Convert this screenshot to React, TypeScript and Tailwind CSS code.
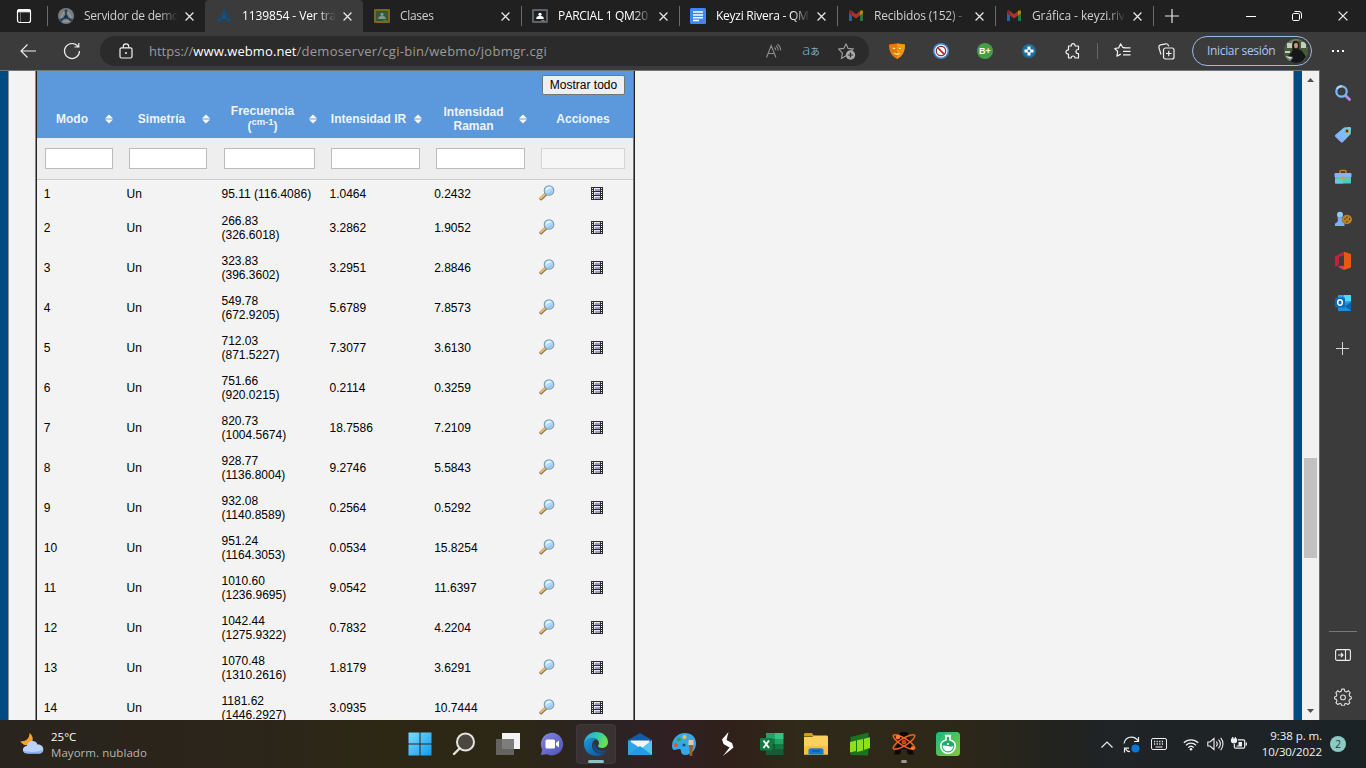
import React from "react";

const UI = "font-['Open_Sans','Noto_Sans',sans-serif]";

/* ---------- favicons ---------- */

function WebMo({ disc }: { disc?: boolean }) {
  return (
    <svg width="16" height="16" viewBox="0 0 16 16" shapeRendering="auto">
      {disc && <circle cx="8" cy="8" r="8" fill="#7d7d7d" />}
      <path d="M8 3v6M8 9l-5 3M8 9l5 3" stroke={disc ? "#1c3c56" : "#0a5590"} strokeWidth="1.5" />
      <path d="M6 4 2.6 10M10 4l3.4 6M5 13.2h6" stroke={disc ? "#a9b4bd" : "#174a6e"} strokeWidth=".8" fill="none" />
      <circle cx="8" cy="2.8" r="1.5" fill={disc ? "#1d4a70" : "#0a4f85"} />
      <circle cx="8" cy="8.8" r="1.9" fill={disc ? "#16334c" : "#0b5a99"} />
      <circle cx="2.6" cy="12.2" r="1.6" fill={disc ? "#1d4a70" : "#0a4f85"} />
      <circle cx="13.4" cy="12.2" r="1.6" fill={disc ? "#1d4a70" : "#0a4f85"} />
    </svg>
  );
}

function Classroom({ frame, inner, person }: { frame: string; inner: string; person: string }) {
  return (
    <svg width="16" height="16" viewBox="0 0 16 16">
      <rect y="1" width="16" height="14" rx="1.2" fill={frame} />
      <rect x="2" y="3" width="12" height="10" fill={inner} />
      <circle cx="8" cy="6.3" r="1.6" fill={person} />
      <path d="M4.3 11V10c0-1.300 2-1.900 3.700-1.900s3.700.6 3.700 1.900v1z" fill={person} />
      <rect x="9.500" y="12" width="3" height="1" fill={person} opacity=".5" />
    </svg>
  );
}

function Docs() {
  return (
    <svg width="16" height="16" viewBox="0 0 16 16">
      <rect width="16" height="16" rx="1.500" fill="#4285f4" />
      <path d="M3 4h10M3 6.900h10M3 9.800h10M3 12.500h6" stroke="#fff" strokeWidth="1.500" />
    </svg>
  );
}

function Gmail() {
  return (
    <svg width="16" height="16" viewBox="0 0 16 16">
      <path d="M1 4.500v8.500h3V7z" fill="#2f5ea8" />
      <path d="M15 4.500v8.500h-3V7z" fill="#237a3c" />
      <path d="M1 3.800C1 2.500 2.500 2 3.500 2.800L8 6.300l4.500-3.500C13.500 2 15 2.500 15 3.800v1.400L8 10.400 1 5.200z" fill="#a8342b" />
      <path d="M12 3.200 12.500 2.800C13.500 2 15 2.500 15 3.800v1.400L12 7.400z" fill="#b08a12" />
      <path d="M1 3.800C1 2.500 2.500 2 3.500 2.800L4 3.200v4.200L1 5.200z" fill="#8d2520" />
    </svg>
  );
}

/* ---------- tab strip ---------- */

function CloseX({ size = 9 }: { size?: number }) {
  return (
    <svg width={size} height={size} viewBox="0 0 8 8">
      <path d="M.5.5l7 7M7.500.5l-7 7" stroke="#e8e8e8" strokeWidth="1.100" />
    </svg>
  );
}

type TabProps = { icon: React.ReactNode; title: string; active?: boolean; bright?: boolean; line?: boolean; spacing?: string };

function Tab({ icon, title, active, bright, line, spacing = "tracking-[-0.2px]" }: TabProps) {
  return (
    <div className={`relative flex h-8 w-[158px] shrink-0 items-center pl-[11px] ${active ? "rounded-t-[4px] bg-[#3b3b3b]" : ""}`}>
      {line && <span className="absolute left-0 top-[6px] h-5 w-px bg-[#6b6b6b]" />}
      <span className="shrink-0">{icon}</span>
      <span
        className={`ml-[10px] w-[94px] overflow-hidden whitespace-nowrap text-[12px] leading-4 [mask-image:linear-gradient(to_right,#000_80%,transparent)] ${spacing} ${active || bright ? "text-white" : "text-[#cfcfcf]"}`}
      >
        {title}
      </span>
      <span className="ml-[7px]">
        <CloseX />
      </span>
    </div>
  );
}

function TabStrip() {
  return (
    <div className="flex h-8 shrink-0 items-center bg-[#202020]">
      <div className="flex w-[47px] justify-center">
        <svg width="16" height="16" viewBox="0 0 16 16" className="ml-[1px]">
          <rect x="1.500" y="1.500" width="13" height="13" rx="2" fill="none" stroke="#fff" strokeWidth="1.200" />
          <path d="M1.500 3.800V3c0-1 .6-1.500 1.500-1.500h10c1 0 1.500.6 1.500 1.500v.8z" fill="#fff" stroke="#fff" />
          <path d="M4.500 4v10" stroke="#999" strokeWidth=".6" />
        </svg>
      </div>
      <Tab line icon={<WebMo disc />} title="Servidor de demo" spacing="tracking-[-0.28px]" />
      <Tab active icon={<WebMo />} title="1139854 - Ver tra" spacing="tracking-[-0.1px]" />
      <Tab icon={<Classroom frame="#80661a" inner="#35553f" person="#7f9a87" />} title="Clases" spacing="tracking-[-0.3px]" />
      <Tab line bright icon={<Classroom frame="#5f6368" inner="#202124" person="#fff" />} title="PARCIAL 1 QM20" spacing="tracking-[-0.3px]" />
      <Tab line bright icon={<Docs />} title="Keyzi Rivera - QM" spacing="tracking-[-0.25px]" />
      <Tab line icon={<Gmail />} title="Recibidos (152) -" />
      <Tab line icon={<Gmail />} title="Gráfica - keyzi.riv" spacing="tracking-[-0.1px]" />
      <div className="relative flex h-8 w-[37px] items-center justify-center">
        <span className="absolute left-0 top-[6px] h-5 w-px bg-[#6b6b6b]" />
        <svg width="14" height="14" viewBox="0 0 14 14">
          <path d="M7 0v14M0 7h14" stroke="#e6e6e6" strokeWidth="1.200" />
        </svg>
      </div>
      <div className="ml-auto flex items-center">
        <div className="flex w-[46px] justify-center">
          <span className="h-px w-[10px] bg-white" />
        </div>
        <div className="flex w-[46px] justify-center">
          <svg width="10" height="10" viewBox="0 0 10 10" fill="none" stroke="#fff">
            <rect x=".5" y="2.500" width="7" height="7" rx="1.200" />
            <path d="M2.500.5H7A2.500 2.500 0 0 1 9.500 3v4.500" />
          </svg>
        </div>
        <div className="flex w-[46px] justify-center">
          <CloseX size={10} />
        </div>
      </div>
    </div>
  );
}

/* ---------- toolbar ---------- */

function Slot({ children, w = "w-11" }: { children: React.ReactNode; w?: string }) {
  return <div className={`flex ${w} shrink-0 items-center justify-center`}>{children}</div>;
}

function Toolbar() {
  return (
    <div className="flex h-[38px] shrink-0 items-center bg-[#3b3b3b] pl-[6px]">
      <Slot>
        <svg width="16" height="14" viewBox="0 0 16 14" fill="none" stroke="#f2f2f2" strokeWidth="1.100">
          <path d="M16 7H1M7.500.5 1 7l6.500 6.500" />
        </svg>
      </Slot>
      <Slot>
        <svg width="18" height="18" viewBox="0 0 18 18" fill="none" stroke="#f2f2f2" strokeWidth="1.200">
          <path d="M15 4.500A7.500 7.500 0 1 0 16.500 9M15.800 1v4h-4.300" />
        </svg>
      </Slot>
      <div className="ml-[6px] flex h-[30px] w-[769px] shrink-0 items-center rounded-full bg-[#2b2b2b] pl-[19px]">
        <svg width="14" height="16" viewBox="0 0 14 16" fill="none" stroke="#f2f2f2" strokeWidth="1.200">
          <rect x="1" y="4.800" width="12" height="10.200" rx="1.500" />
          <path d="M4.300 4.800V3.500C4.300 1.800 5.300.8 7 .8s2.700 1 2.700 2.700v1.300" />
          <circle cx="7" cy="10" r="1" fill="#f2f2f2" stroke="none" />
        </svg>
        <div className="ml-4 w-[602px] whitespace-nowrap text-[13px] leading-[18px] text-[#9b9b9b]">
          <span>https://</span>
          <span className="tracking-[0.08px] text-white">www.webmo.net</span>
          <span className="tracking-[0.27px]">/demoserver/cgi-bin/webmo/jobmgr.cgi</span>
        </div>
        <Slot w="w-[46px]">
          <svg width="16" height="14" viewBox="0 0 16 14" fill="none" stroke="#8e8e8e" strokeWidth="1.100">
            <path d="M.5 13.500 5.200 1.500l4.700 12M2.200 9.500h6M8.500 3.500c1 .7 1.300 1.600 1.300 2.800M10 1.700c1.600 1.100 2.300 2.700 2.300 4.700M11.500.3c2 1.300 3.100 3.400 3.100 6" />
          </svg>
        </Slot>
        <Slot w="w-[28px]">
          <span className="whitespace-nowrap pb-[3px] text-[12px] leading-none text-[#83b5dc]">
            <span className="text-[15px] font-light">a</span>
            <span className="font-['Noto_Sans_CJK_JP',sans-serif] text-[9.500px]">あ</span>
          </span>
        </Slot>
        <Slot w="w-[44px]">
          <svg width="18" height="17" viewBox="0 0 18 17">
            <path d="M8 .8l2.100 4.600 5 .6-3.600 3.500M8 12.800l-4.500 2.600.9-5.200L.8 6l5-.6L8 .8" fill="none" stroke="#a0a0a0" strokeWidth="1.100" />
            <circle cx="12.500" cy="12" r="4.700" fill="#a8a8a8" />
            <path d="M12.500 9.400v5.200M9.900 12h5.200" stroke="#2b2b2b" strokeWidth="1.200" />
          </svg>
        </Slot>
      </div>
      <div className="ml-[6px] flex shrink-0">
        <Slot>
          <svg width="16" height="16" viewBox="0 0 16 16">
            <path d="M0 1.500C3 1.500 5 .5 8 .5s5 1 8 1c0 7-2.500 11.500-8 14.500C2.500 13 0 8.500 0 1.500z" fill="#e8780c" />
            <path d="M8 .5c3 0 5 1 8 1 0 7-2.500 11.500-8 14.500z" fill="#f7980f" />
            <path d="M3 5.800c1-2 3-2 4 0-1.300.9-2.700.9-4 0zM9 5.800c1-2 3-2 4 0-1.300.9-2.700.9-4 0zM3.500 8.800c2.500 1.800 6.500 1.800 9 0-.8 4.600-8.200 4.600-9 0z" fill="#fff06b" stroke="#9c4506" strokeWidth=".4" />
          </svg>
        </Slot>
        <Slot>
          <svg width="16" height="16" viewBox="0 0 16 16">
            <circle cx="8" cy="8" r="8" fill="#3d8bd6" />
            <circle cx="8" cy="8" r="6.500" fill="#f2f2f2" />
            <circle cx="8" cy="8" r="4.700" fill="#fff" stroke="#7a3236" strokeWidth="1.200" />
            <path d="M4.700 4.700l6.600 6.600" stroke="#b3262a" strokeWidth="1.700" />
          </svg>
        </Slot>
        <Slot>
          <span className="flex h-4 w-4 items-center justify-center rounded-full bg-[#43a047] font-['Liberation_Sans',sans-serif] text-[9px] font-bold leading-none text-white">
            B+
          </span>
        </Slot>
        <Slot>
          <svg width="14" height="14" viewBox="0 0 14 14">
            <circle cx="7" cy="7" r="7" fill="#1f6f9e" />
            <path d="M5.500 2.500h3v3h3v3h-3v3h-3v-3h-3v-3h3z" fill="#fff" />
            <rect x="5.800" y="5.800" width="2.400" height="2.400" fill="#2479a8" />
          </svg>
        </Slot>
        <Slot>
          <svg width="16" height="17" viewBox="0 0 16 17" fill="none" stroke="#f0f0f0" strokeWidth="1.200" strokeLinejoin="round">
            <path d="M3.500 3h2.800C6 1.600 6.800.7 8.100.7S10.300 1.600 10 3H13.500v3.500H13c-1.200 0-2 .8-2 2s.8 2 2 2h.5V15H10c.1-1.200-.7-2-2-2s-1.900.8-1.800 2H3.500v-4C2 11.200 1 10.300 1 9s1-2.200 2.500-2z" />
          </svg>
        </Slot>
      </div>
      <span className="ml-[2px] h-4 w-px shrink-0 bg-[#666]" />
      <div className="ml-[2px] flex shrink-0">
        <Slot>
          <svg width="17" height="16" viewBox="0 0 17 16" fill="none" stroke="#f0f0f0" strokeWidth="1.200" strokeLinejoin="round">
            <path d="M11 4.700 8.800 4.500 6.600.8 4.700 4.900.7 5.500l3 3-.8 4.600 3.900-2M9 4.800h7.500M9 8.300h7.500M9 11.800h7.500" />
          </svg>
        </Slot>
        <Slot>
          <svg width="17" height="17" viewBox="0 0 17 17" fill="none" stroke="#f0f0f0" strokeWidth="1.200">
            <rect x="5.500" y="5" width="10.500" height="11" rx="2" />
            <path d="M10.750 7.700v5.600M8 10.500h5.500M3 11.500 1 4.800C.6 3.300 1.200 2.300 2.500 1.900L7.800.8c1.200-.2 2 .3 2.500 1.500l.4 1" />
          </svg>
        </Slot>
      </div>
      <div className="ml-[4px] flex h-[30px] w-[120px] shrink-0 items-center justify-between rounded-full border border-[#9cb9e8] pl-[14px] pr-[3px]">
        <span className="whitespace-nowrap text-[12px] tracking-[-0.33px] text-[#abc8f5]">Iniciar sesión</span>
        <svg width="24" height="24" viewBox="0 0 24 24" className="rounded-full">
          <rect width="24" height="24" fill="#6e8062" />
          <path d="M0 7l6-4 4 3 5-5 9 5v12H0z" fill="#435a3b" />
          <path d="M3 4h5v5H3zM17 3h5v6h-5zM1 12h5v2H1z" fill="#c3cfbb" />
          <path d="M9 3c3-3 7 0 6 5l-1 5H8c1-3 0-7 1-10z" fill="#211713" />
          <ellipse cx="12" cy="6.500" rx="2" ry="2.700" fill="#c59a83" />
          <path d="M8 13c2-3 7-4 10-1l4 6-5 6H5l4-5-6-1z" fill="#15161a" />
          <path d="M1 17l8 1-3 2z" fill="#d8d9d2" />
        </svg>
      </div>
      <div className="ml-[20px] flex gap-[3px]">
        <span className="h-[2px] w-[2px] bg-white" />
        <span className="h-[2px] w-[2px] bg-white" />
        <span className="h-[2px] w-[2px] bg-white" />
      </div>
    </div>
  );
}

/* ---------- results table ---------- */

const COLS = "grid grid-cols-[84px_95px_107px_105px_105px_100px]";

const rows: [string, string, string, string][] = [
  ["95.11", "(116.4086)", "1.0464", "0.2432"],
  ["266.83", "(326.6018)", "3.2862", "1.9052"],
  ["323.83", "(396.3602)", "3.2951", "2.8846"],
  ["549.78", "(672.9205)", "5.6789", "7.8573"],
  ["712.03", "(871.5227)", "7.3077", "3.6130"],
  ["751.66", "(920.0215)", "0.2114", "0.3259"],
  ["820.73", "(1004.5674)", "18.7586", "7.2109"],
  ["928.77", "(1136.8004)", "9.2746", "5.5843"],
  ["932.08", "(1140.8589)", "0.2564", "0.5292"],
  ["951.24", "(1164.3053)", "0.0534", "15.8254"],
  ["1010.60", "(1236.9695)", "9.0542", "11.6397"],
  ["1042.44", "(1275.9322)", "0.7832", "4.2204"],
  ["1070.48", "(1310.2616)", "1.8179", "3.6291"],
  ["1181.62", "(1446.2927)", "3.0935", "10.7444"],
];

function SortIcon() {
  return (
    <svg width="8" height="10" viewBox="0 0 8 10" className="shrink-0">
      <path d="M4 0.500 8 4.500H0zM0 5.500h8l-4 4z" fill="#fff" />
    </svg>
  );
}

function Head({ children, first }: { children: React.ReactNode; first?: boolean }) {
  return (
    <div className="flex items-center">
      <div className={`flex-1 text-center ${first ? "pl-[2px]" : ""}`}>{children}</div>
      <div className={`flex justify-start ${first ? "w-4" : "w-[14px]"}`}>
        <SortIcon />
      </div>
    </div>
  );
}

function Magnifier() {
  return (
    <svg width="16" height="16" viewBox="0 0 16 16">
      <path d="M2 13.700 6.500 9.500" stroke="#8a7a62" strokeWidth="3.400" strokeLinecap="round" />
      <path d="M1.800 13.200 6 9.300" stroke="#f3bd60" strokeWidth="1.900" strokeLinecap="round" />
      <circle cx="10" cy="5.500" r="4.800" fill="#b5dcf7" stroke="#7d99b3" strokeWidth="1.100" />
      <path d="M6.500 5.800C6.500 3.500 8.300 2 10.300 2c1 0 1.900.3 2.400.9-2 .1-4.500 1.200-6.200 2.900z" fill="#effaff" />
      <path d="M7.500 7.800c2.300.5 4.500-.6 5.900-3.300.4 3.600-3.300 6.300-5.900 3.300z" fill="#83c4f0" />
    </svg>
  );
}

function Film() {
  return (
    <svg width="12" height="13" viewBox="0 0 12 13" shapeRendering="crispEdges">
      <rect width="12" height="13" fill="#2b2b2b" />
      <path d="M1.500 1v12M10.500 1v12" stroke="#f3f3f3" strokeWidth="1" strokeDasharray="1 1" />
      <path d="M3 1h6v3H3zM3 5h6v3H3zM3 9h6v3H3z" fill="#e8e8f4" />
      <path d="M4 2h5v2H4zM4 6h5v2H4zM4 10h5v2H4z" fill="#9a9ac8" />
    </svg>
  );
}

function ResultsTable() {
  return (
    <div className="w-[600px] shrink-0 border-l border-r border-l-[#8a8a8a] border-r-[#222] font-['Liberation_Sans',Arial,sans-serif] text-[12px] leading-[14px] text-black">
      <div className="border-l border-r border-l-[#222] border-r-[#777]">
        <div className="flex h-[67px] flex-col bg-[#5b98dc]">
          <div className="flex justify-end pr-[8px] pt-[4px]">
            <button className="h-5 w-[83px] whitespace-nowrap rounded-[2px] border border-[#767676] bg-[#efefef] text-[12px] leading-none text-black">
              Mostrar todo
            </button>
          </div>
          <div className={`${COLS} h-[43px] items-center pt-[5px] font-bold text-[#eef4fb]`}>
            <Head first>Modo</Head>
            <Head>Simetría</Head>
            <Head>
              <div>Frecuencia</div>
              <div className="leading-[17px]">
                (<sup className="text-[9.500px]">cm-1</sup>)
              </div>
            </Head>
            <Head>
              <span className="whitespace-nowrap">Intensidad IR</span>
            </Head>
            <Head>
              Intensidad
              <br />
              Raman
            </Head>
            <div className="text-center">Acciones</div>
          </div>
        </div>
        <div className={`${COLS} h-[42px] items-center border-b border-[#ccc] bg-[#eee] [&>span]:ml-2 [&>span]:h-[21px] [&>span]:border [&>span]:border-[#bbb] [&>span]:bg-white`}>
          <span className="w-[68px]" />
          <span className="w-[78px]" />
          <span className="w-[91px]" />
          <span className="w-[89px]" />
          <span className="w-[89px]" />
          <span className="w-[84px] opacity-50" />
        </div>
        {rows.map((r, i) => (
          <div key={i} className={`${COLS} items-center ${i === 0 ? "h-7" : "h-10"}`}>
            <div className="pl-[6.800px]">{i + 1}</div>
            <div className="pl-[5.500px]">Un</div>
            <div className="pl-[5.500px]">
              {i === 0 ? (
                <span className="whitespace-nowrap">{`${r[0]} ${r[1]}`}</span>
              ) : (
                <>
                  {r[0]}
                  <br />
                  {r[1]}
                </>
              )}
            </div>
            <div className="pl-[6.500px]">{r[2]}</div>
            <div className="pl-[6.200px]">{r[3]}</div>
            <div className="flex items-center gap-9 pb-[2px] pl-[6px]">
              <Magnifier />
              <Film />
            </div>
          </div>
        ))}
      </div>
    </div>
  );
}

/* ---------- edge sidebar ---------- */

function Sidebar() {
  return (
    <div className="flex w-[47px] shrink-0 flex-col items-center border-l border-[#6a6a6a] bg-[#3b3b3b] pr-px [&>div]:flex [&>div]:h-[42px] [&>div]:shrink-0 [&>div]:items-center">
      <div className="mt-[2px]">
        <svg width="18" height="18" viewBox="0 0 18 18">
          <path d="M11.500 11.500l4 4" stroke="#b88be8" strokeWidth="2.800" strokeLinecap="round" />
          <circle cx="7.500" cy="7.500" r="5.200" fill="none" stroke="#77b8f5" strokeWidth="2.200" />
          <path d="M3 5c1-2 3-3 5-2.700" stroke="#a3dcfb" strokeWidth="2" fill="none" />
        </svg>
      </div>
      <div>
        <svg width="18" height="18" viewBox="0 0 18 18">
          <defs>
            <linearGradient id="tag" x1="1" y1="0" x2="0" y2="1">
              <stop offset="0" stopColor="#6bd4f5" />
              <stop offset="1" stopColor="#91a5fb" />
            </linearGradient>
          </defs>
          <path d="M10 1.500l5.500-.5c1 0 1.500.5 1.500 1.500l-.3 5.500-7.700 8c-.8.8-1.500.8-2.300 0L1.500 11c-.8-.8-.8-1.500 0-2.300z" fill="url(#tag)" />
          <circle cx="13" cy="5" r="1.800" fill="#4a3510" stroke="#d69019" strokeWidth="1.100" />
        </svg>
      </div>
      <div>
        <svg width="18" height="16" viewBox="0 0 18 16">
          <path d="M6 4V2.500C6 1.700 6.500 1.500 7 1.500h4c.7 0 1 .3 1 1V4" stroke="#b98325" strokeWidth="1.500" fill="none" />
          <rect x="1" y="6" width="16" height="8.500" rx="1" fill="#4fcbb9" />
          <path d="M1 10h8v4.500H1z" fill="#68c9d6" />
          <path d="M.5 5c0-.7.3-1 1-1h15c.7 0 1 .3 1 1v3H.5z" fill="#86b3f3" />
          <circle cx="9" cy="9" r="1.800" fill="#d8a12e" />
        </svg>
      </div>
      <div>
        <svg width="18" height="16" viewBox="0 0 18 16">
          <circle cx="6" cy="3.800" r="3" fill="#8dcbfb" />
          <path d="M3 6.500h6L7.800 8c0 2 .7 3.500 2.700 4.500V15H1v-2.500C3.300 11.500 4 10 4 8z" fill="#80adf9" />
          <ellipse cx="13" cy="8.500" rx="5" ry="4.700" fill="#b78322" />
          <path d="M10.500 8h1M13 5.700v1M15 8h1M13 10.300v1" stroke="#3b2b10" strokeWidth="1.400" />
        </svg>
      </div>
      <div>
        <svg width="18" height="20" viewBox="0 0 18 20">
          <path d="M1 5.500 10 .7l4 1.300-4 2.500L5 6v8l-4 2z" fill="#c3223d" />
          <path d="M10 .7 17 3v13.500L10 19z" fill="#e8590c" />
          <path d="M5 6l5-1.500V15l-5.500-.7L5 12z" fill="#3b3b3b" />
          <path d="M4.500 15l5.500-.3V19l-5-2.500z" fill="#e23b52" />
        </svg>
      </div>
      <div>
        <svg width="18" height="18" viewBox="0 0 18 18">
          <rect x="4" y="1" width="13" height="12" rx="1" fill="#28a8ea" />
          <path d="M10 1h7v6h-7z" fill="#50d9ff" />
          <path d="M17 8v8c0 .6-.4 1-1 1H5c-.6 0-1-.4-1-1v-5z" fill="#1490df" />
          <path d="M17 8l-6 4.500 6 4z" fill="#0a62b0" />
          <rect x="1" y="3.500" width="10" height="10" rx="1" fill="#0869bd" />
          <ellipse cx="6" cy="8.500" rx="2.300" ry="2.700" fill="none" stroke="#fff" strokeWidth="1.500" />
        </svg>
      </div>
      <div className="mt-[3px]">
        <svg width="13" height="13" viewBox="0 0 13 13">
          <path d="M6.500 0v13M0 6.500h13" stroke="#d4d4d4" />
        </svg>
      </div>
      <span className="mt-auto h-px w-7 shrink-0 bg-[#777]" />
      <div className="mt-[2px]">
        <svg width="16" height="12" viewBox="0 0 16 12" fill="none" stroke="#eee" strokeWidth="1.100">
          <rect x=".6" y=".6" width="14.800" height="10.800" rx="1.500" />
          <path d="M10.500.6v10.800M3 6h5M6 4l2 2-2 2" />
        </svg>
      </div>
      <div className="mb-[2px]">
        <svg width="18" height="18" viewBox="0 0 24 24" fill="none" stroke="#ddd" strokeWidth="1.500" strokeLinejoin="round">
          <path d="M9.700 4.300 10.300 1.500h3.400l.6 2.800 2.300 1 2.500-1.700 2.400 2.800-1.300 2.600.8 2 2 .9v2.500l-2.300.8-.8 2 1.200 2.600-2.600 2.200-2.400-1.500-2 .9-.8 2.600h-2.800l-.8-2.600-2-.9-2.500 1.500-2.500-2.200 1.200-2.600-.8-2L.8 14.400v-2.500l2.200-.9.8-2L2.500 6.400l2.400-2.800 2.500 1.700z" />
          <circle cx="12" cy="12.500" r="3.200" />
        </svg>
      </div>
    </div>
  );
}

function Scrollbar() {
  return (
    <div className="flex w-[17px] shrink-0 flex-col items-center bg-[#f1f1f1]">
      <svg width="7" height="4" viewBox="0 0 7 4" className="mt-[7px]">
        <path d="M3.500 0 7 4H0z" fill="#505050" />
      </svg>
      <div className="mt-[376px] h-[100px] w-[13px] bg-[#c1c1c1]" />
      <svg width="7" height="4" viewBox="0 0 7 4" className="mb-[7px] mt-auto">
        <path d="M0 0h7L3.500 4z" fill="#505050" />
      </svg>
    </div>
  );
}

/* ---------- taskbar ---------- */

const taskIcons: React.ReactNode[] = [
  <svg width="24" height="24" viewBox="0 0 24 24">
    <defs>
      <linearGradient id="win" x1="0" y1="0" x2="1" y2="1">
        <stop offset="0" stopColor="#7cdcff" />
        <stop offset="1" stopColor="#0f9bf0" />
      </linearGradient>
    </defs>
    <path d="M.5.5h11v11H.5zM12.500.5h11v11h-11zM.5 12.500h11v11H.5zM12.500 12.500h11v11h-11z" fill="url(#win)" />
  </svg>,
  <svg width="24" height="24" viewBox="0 0 24 24">
    <circle cx="13.500" cy="10" r="8.500" fill="#4b4740" stroke="#e6e4e0" strokeWidth="2" />
    <path d="M7.500 16.500 2 22" stroke="#e6e4e0" strokeWidth="2.400" strokeLinecap="round" />
  </svg>,
  <svg width="24" height="24" viewBox="0 0 24 24">
    <rect x="6" y="1" width="18" height="16" fill="#f3f3f3" />
    <rect y="7" width="18" height="16" fill="#6c6c6b" opacity=".88" />
  </svg>,
  <svg width="24" height="24" viewBox="0 0 24 24">
    <defs>
      <linearGradient id="chat" x1="0" y1="0" x2="1" y2="1">
        <stop offset="0" stopColor="#8387d8" />
        <stop offset="1" stopColor="#4e51bd" />
      </linearGradient>
    </defs>
    <path d="M12 .8A11.300 11.300 0 1 1 7 22.300L.8 23l1.500-5.300A11.300 11.300 0 0 1 12 .8z" fill="url(#chat)" />
    <rect x="5.500" y="7.500" width="9.500" height="9" rx="1.500" fill="#fff" />
    <path d="M16 10.800l3-2.300v7l-3-2.300z" fill="#fff" />
  </svg>,
  <svg width="24" height="24" viewBox="0 0 24 24">
    <defs>
      <linearGradient id="edgeA" x1="0" y1="0" x2="1" y2=".3">
        <stop offset="0" stopColor="#24a5e4" />
        <stop offset=".55" stopColor="#32c6b8" />
        <stop offset="1" stopColor="#66e34f" />
      </linearGradient>
      <linearGradient id="edgeB" x1="0" y1="0" x2="1" y2="1">
        <stop offset="0" stopColor="#1b9de0" />
        <stop offset="1" stopColor="#0b4a96" />
      </linearGradient>
    </defs>
    <path d="M0 12C0 5 5.500 0 12 0c7.500 0 12 5 12 10 0 3.700-2.700 6-6 6-2.500 0-4-1-4-2 0-.8 1-1.500 1-3 0-2.500-2.500-4.800-6-4.800-4.500 0-8 2.300-9 5.800z" fill="url(#edgeA)" />
    <path d="M0 12C.3 8.500 4 6.200 9 6.200c1.500 0 3 .5 4 1.300-2.500-.3-5 2-5 6 0 4.500 4 8 9 8 2 0 3.700-.5 5-1.300C20 22.700 16.500 24 12.500 24 5.500 24 0 19 0 12z" fill="url(#edgeB)" />
    <path d="M9.700 10.500c-2.700 6 2.300 11 8.300 10.300 2-.3 3.800-1.300 4.800-2.800-4 1.600-10 .8-11.300-4.500z" fill="#0d4f97" />
  </svg>,
  <svg width="24" height="24" viewBox="0 0 24 24">
    <path d="M0 8 12 1l12 7v4H0z" fill="#0f5ca8" />
    <path d="M2.500 8.500h19V16h-19z" fill="#f4f4f4" />
    <path d="M0 8l15 10-3 5H0z" fill="#2fa5e8" />
    <path d="M24 8 5 23h19z" fill="#53c7f3" />
    <path d="M0 23h24L12 14z" fill="#229be0" />
  </svg>,
  <svg width="24" height="24" viewBox="0 0 24 24">
    <path d="M13 1C5.500 1 0 7 0 14c0 4 2 4.500 4.500 3.500S9 16.500 9 19s1.500 4 4.500 4C19 23 24 18 24 11.500 24 5 19.500 1 13 1z" fill="#35a9e6" />
    <circle cx="3.800" cy="13" r="2.100" fill="#e4502e" />
    <circle cx="7" cy="7.500" r="2.100" fill="#2da64c" />
    <circle cx="12.500" cy="5" r="2" fill="#f5c32b" />
    <circle cx="12" cy="13" r="1.600" fill="#155477" />
    <rect x="16.500" y="8" width="5" height="5" fill="#e7c9a9" />
    <path d="M17 13h4l-.8 11h-2.400z" fill="#a35d20" />
  </svg>,
  <svg width="24" height="24" viewBox="0 0 24 24">
    <path d="M12.500 0 6 7.500 7.500 12l6 3.500L7 24l10.500-8.500L16 11l-5.500-3z" fill="#fff" />
  </svg>,
  <svg width="24" height="24" viewBox="0 0 24 24">
    <path d="M6 1h9v6H6z" fill="#21a366" />
    <path d="M15 1h8.500v6H15z" fill="#33c481" />
    <path d="M6 7h9v5H6zM15 12h8.500v5H15z" fill="#107c41" />
    <path d="M15 7h8.500v5H15z" fill="#21a366" />
    <path d="M6 12h9v5h8.500v6H6z" fill="#185c37" />
    <rect y="6" width="12.500" height="12.500" rx="1" fill="#107c41" />
    <path d="M3.500 8.500l5.500 7.500M9 8.500 3.500 16" stroke="#fff" strokeWidth="1.900" />
  </svg>,
  <svg width="24" height="24" viewBox="0 0 24 24">
    <path d="M0 2.500C0 1.500.6 1 1.500 1H8l2.500 3.500H0z" fill="#d29a16" />
    <path d="M0 5h8l2-1.500h12.500c1 0 1.500.6 1.500 1.500v17.500H0z" fill="#fbd05c" />
    <path d="M0 14h24v8.500H0z" fill="#f7c33d" />
    <path d="M4.500 22.500v-4c0-1.500.8-2.300 2.300-2.300h10.400c1.500 0 2.300.8 2.300 2.300v4z" fill="#147bd1" />
    <path d="M8 19h8" stroke="#0c4f92" strokeWidth="1.200" />
  </svg>,
  <svg width="24" height="24" viewBox="0 0 24 24">
    <path d="M2.500 5 20.500.5v18L20 23.500 2.500 23z" fill="#19741d" />
    <path d="M2 10l6-1.500V19l-6 1.500zM9 8.200l6-1.200v11.500L9 20zM16 6.800l6-1.500V16l-6 1.800z" fill="#8fe01a" />
  </svg>,
  <svg width="24" height="24" viewBox="0 0 24 24">
    <path d="M8.500 0h7L22 22.500h-6L14.500 17h-5L8 22.500H2z" fill="#0b0806" />
    <g fill="none" stroke="#ef6424" strokeWidth="1.500">
      <ellipse cx="12" cy="10" rx="12.500" ry="3.600" transform="rotate(32 12 10)" />
      <ellipse cx="12" cy="10" rx="12.500" ry="3.600" transform="rotate(-32 12 10)" />
    </g>
    <circle cx="6" cy="5" r="2.300" fill="#ff7d30" />
    <circle cx="12" cy="10" r="2.500" fill="#c84616" />
    <circle cx="20.500" cy="16" r="1.800" fill="#ff7d30" />
  </svg>,
  <svg width="24" height="24" viewBox="0 0 24 24">
    <defs>
      <linearGradient id="lab" x1="0" y1="0" x2="1" y2="1">
        <stop offset="0" stopColor="#12bb84" />
        <stop offset="1" stopColor="#8bc832" />
      </linearGradient>
    </defs>
    <rect width="24" height="24" rx="3.500" fill="url(#lab)" />
    <path d="M10 4h4v4c3.300.8 5.200 3 5.200 6a7.200 7.200 0 0 1-14.400 0c0-3 1.900-5.200 5.200-6z" fill="#16ad6d" stroke="#fff" strokeWidth="1.600" />
    <path d="M8.800 3.500h6.400" stroke="#fff" strokeWidth="1.500" />
    <path d="M6.500 14c3-1.500 7 2 11 0-.3 3-2.500 5.300-5.500 5.300S6.800 17 6.500 14z" fill="#fff" />
    <circle cx="12" cy="12" r="1" fill="#fff" />
  </svg>,
];

function Taskbar() {
  return (
    <div className="flex h-12 shrink-0 items-center bg-[linear-gradient(to_right,#29241d_0,#2b251a_250px,#2c2814_380px,#2c2716_520px,#2a2324_600px,#302023_670px,#302019_735px,#302a19_800px,#2d2719_960px,#22231f_1060px,#202427_1110px,#1b2225_1366px)]">
      <div className="flex w-[398px] shrink-0 items-center pl-5">
        <svg width="24" height="24" viewBox="0 0 24 24">
          <path d="M9.500 1c3.500 2.500 4.500 7 1.500 10.500C7.500 15 1.500 13 .5 9c4 1 9-1.500 9-8z" fill="#f5a32c" />
          <path d="M7.500 21.500c-6 0-6-7.500-.5-7.500.5-6 9-6.500 10.500-1.500 7-.5 8 9 1.500 9z" fill="#bcd2f8" />
          <path d="M3.500 18.500c3 2 16 2 19.500-1 0 2.500-1.500 4-4 4h-11c-2 0-3.800-1-4.500-3z" fill="#8fb2ee" />
        </svg>
        <div className="ml-[7px] whitespace-nowrap pt-px text-[11.500px] leading-4">
          <div className="text-white">25°C</div>
          <div className="tracking-[0.05px] text-[#b9b6b2]">Mayorm. nublado</div>
        </div>
      </div>
      {taskIcons.map((icon, i) => (
        <div key={i} className="relative flex h-12 w-11 shrink-0 items-center justify-center">
          {i === 4 && <span className="absolute left-[2px] top-1 h-10 w-10 rounded-[4px] border border-[#42393a] bg-[#393132]" />}
          <span className="relative">{icon}</span>
          {i === 4 && <span className="absolute bottom-[5px] left-[14px] h-[3px] w-4 rounded-full bg-[#8ac5c3]" />}
          {i === 11 && <span className="absolute bottom-[5px] left-[19px] h-[3px] w-[6px] rounded-full bg-[#9b9890]" />}
        </div>
      ))}
      <div className="ml-auto flex items-center">
        <Slot w="w-6">
          <svg width="12" height="7" viewBox="0 0 12 7" fill="none" stroke="#eee" strokeWidth="1.200">
            <path d="M.5 6.500 6 1l5.500 5.500" />
          </svg>
        </Slot>
        <Slot w="w-6">
          <svg width="17" height="17" viewBox="0 0 17 17" fill="none" stroke="#eee" strokeWidth="1.200">
            <path d="M1 7.500C1.800 3.500 5 1.200 8.500 1.200c2.800 0 5 1.300 6.500 3.800M15.500 1v4.500H11M7 15.700c-2 0-3.500-1-4.500-2.500M1.500 16.500v-4.300H6" />
            <circle cx="12.500" cy="12.500" r="4" fill="#0b78dc" stroke="none" />
          </svg>
        </Slot>
        <Slot w="w-8">
          <svg width="16" height="12" viewBox="0 0 16 12" fill="none" stroke="#eee">
            <rect x=".5" y=".5" width="15" height="11" rx="1.500" />
            <path d="M3 3.500h10M3 6h10" strokeDasharray="1.200 1.400" strokeWidth="1.300" />
            <path d="M4.500 9h7" />
          </svg>
        </Slot>
        <Slot w="w-8">
          <svg width="16" height="13" viewBox="0 0 16 13" fill="none" stroke="#eee" strokeWidth="1.300">
            <path d="M.8 4.800c4-4 10.400-4 14.400 0M3 7.300c2.800-2.800 7.200-2.800 10 0M5.200 9.600c1.600-1.500 4-1.500 5.600 0" />
            <circle cx="8" cy="11.300" r="1.300" fill="#eee" stroke="none" />
          </svg>
        </Slot>
        <Slot w="w-4">
          <svg width="17" height="14" viewBox="0 0 17 14" className="shrink-0" fill="none" stroke="#eee" strokeWidth="1.100">
            <path d="M.8 5v4H3l4 3.500v-11L3 5zM9.300 4.500c1.200 1.500 1.200 3.500 0 5M11.500 2.700c2.200 2.500 2.200 6 0 8.600M13.700.9c3 3.500 3 8.700 0 12.200" />
          </svg>
        </Slot>
        <Slot w="w-8">
          <svg width="16" height="14" viewBox="0 0 16 14" fill="none" stroke="#eee" strokeWidth="1.200">
            <path d="M7 2.800h5.500c.8 0 1.200.4 1.200 1.200v6c0 .8-.4 1.200-1.200 1.200h-8c-.8 0-1.200-.4-1.200-1.200V7M15.300 5.500v3" />
            <path d="M5.500 8.500h2V5H11v4.500H5.500z" fill="#eee" stroke="none" />
            <path d="M.5 2h5v2c0 1-1 2-2.500 2S.5 5 .5 4zM1.700 0v2M4.300 0v2" fill="#eee" />
          </svg>
        </Slot>
        <div className="w-[67px] whitespace-nowrap text-right text-[11.500px] leading-4 tracking-[-0.08px] text-[#f2f2f2]">
          <div>9:38 p. m.</div>
          <div>10/30/2022</div>
        </div>
        <span className="ml-2 mr-5 flex h-4 w-4 items-center justify-center rounded-full bg-[#8bc9c3] text-[10px] leading-none text-[#1c3a3a]">2</span>
      </div>
    </div>
  );
}

export default function App() {
  return (
    <div className={`flex h-[768px] w-[1366px] flex-col overflow-hidden bg-[#3b3b3b] ${UI}`}>
      <TabStrip />
      <Toolbar />
      <div className="flex h-[650px] shrink-0">
        <div className="flex w-[1319px] shrink-0 overflow-hidden border-t border-[#757575]">
          <div className="w-2 shrink-0 bg-[#004b80]" />
          <div className="flex w-[1286px] shrink-0 border-l border-r border-[#8f979c] bg-[#f3f3f3] pl-[26px]">
            <ResultsTable />
          </div>
          <div className="w-2 shrink-0 bg-[#004b80]" />
          <Scrollbar />
        </div>
        <Sidebar />
      </div>
      <Taskbar />
    </div>
  );
}
